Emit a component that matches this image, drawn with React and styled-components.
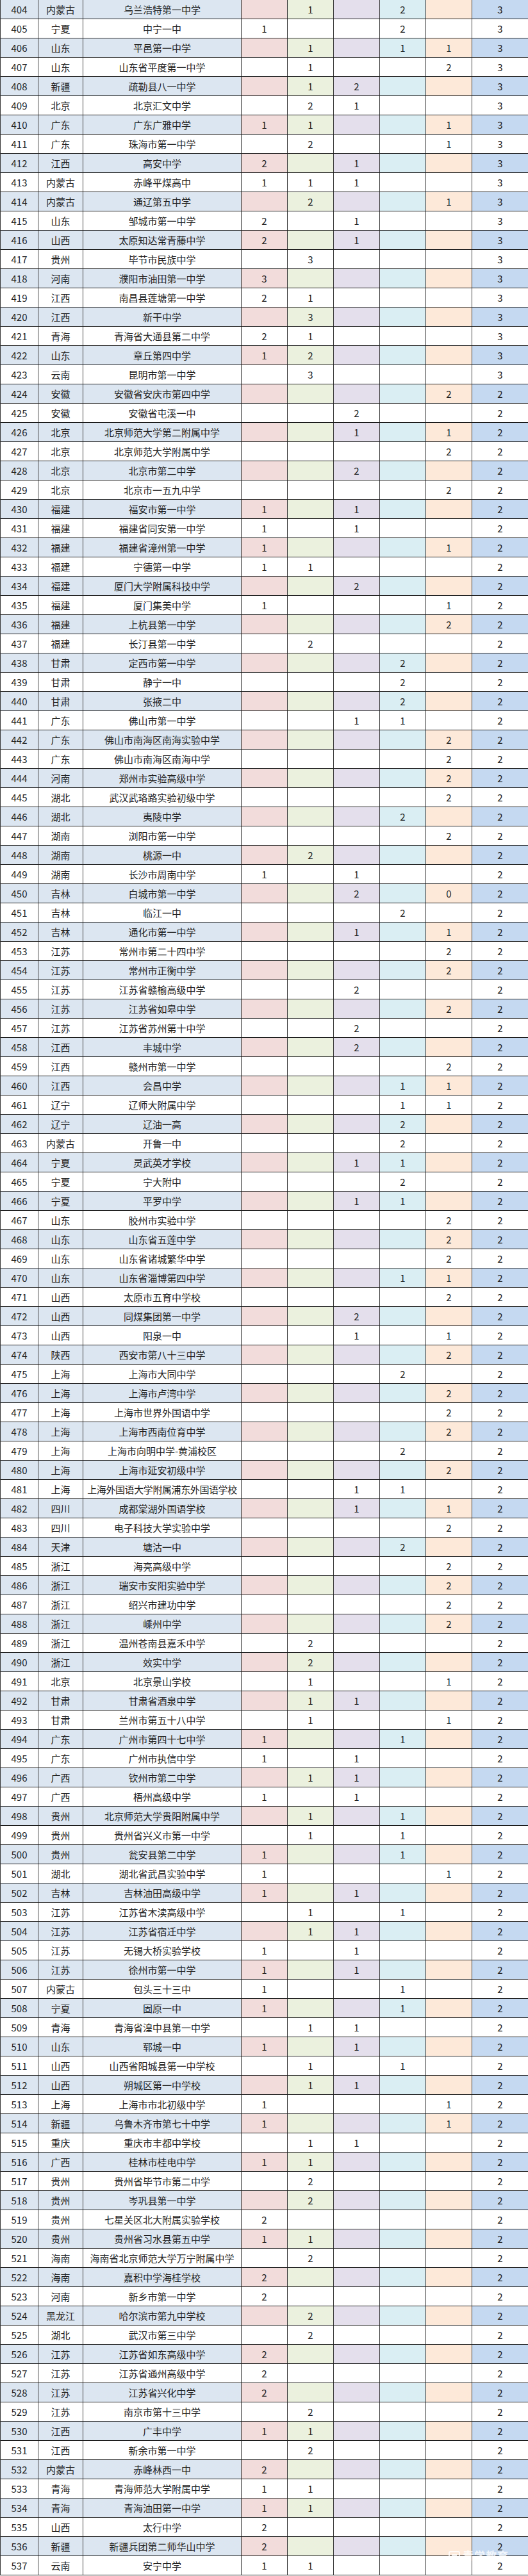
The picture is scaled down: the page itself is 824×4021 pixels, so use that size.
import React from 'react';
import styled, { createGlobalStyle } from 'styled-components';

const GlobalStyle = createGlobalStyle`
  html, body {
    margin: 0;
    padding: 0;
    background: #ffffff;
  }
  body {
    font-family: "Noto Sans CJK SC", "Liberation Sans", sans-serif;
  }
`;

// shaded-row colours, one per column
const SHADES = [
  '#dce6f1',
  '#dce6f1',
  '#dce6f1',
  '#f2dcdb',
  '#ebf1de',
  '#e4dfec',
  '#daeef3',
  '#fde9d9',
  '#c5d9f1',
];

const ROWS = `404|内蒙古|乌兰浩特第一中学|,1,,2,,3
405|宁夏|中宁一中|1,,,2,,3
406|山东|平邑第一中学|,1,,1,1,3
407|山东|山东省平度第一中学|,1,,,2,3
408|新疆|疏勒县八一中学|,1,2,,,3
409|北京|北京汇文中学|,2,1,,,3
410|广东|广东广雅中学|1,1,,,1,3
411|广东|珠海市第一中学|,2,,,1,3
412|江西|高安中学|2,,1,,,3
413|内蒙古|赤峰平煤高中|1,1,1,,,3
414|内蒙古|通辽第五中学|,2,,,1,3
415|山东|邹城市第一中学|2,,1,,,3
416|山西|太原知达常青藤中学|2,,1,,,3
417|贵州|毕节市民族中学|,3,,,,3
418|河南|濮阳市油田第一中学|3,,,,,3
419|江西|南昌县莲塘第一中学|2,1,,,,3
420|江西|新干中学|,3,,,,3
421|青海|青海省大通县第二中学|2,1,,,,3
422|山东|章丘第四中学|1,2,,,,3
423|云南|昆明市第一中学|,3,,,,3
424|安徽|安徽省安庆市第四中学|,,,,2,2
425|安徽|安徽省屯溪一中|,,2,,,2
426|北京|北京师范大学第二附属中学|,,1,,1,2
427|北京|北京师范大学附属中学|,,,,2,2
428|北京|北京市第二中学|,,2,,,2
429|北京|北京市一五九中学|,,,,2,2
430|福建|福安市第一中学|1,,1,,,2
431|福建|福建省同安第一中学|1,,1,,,2
432|福建|福建省漳州第一中学|1,,,,1,2
433|福建|宁德第一中学|1,1,,,,2
434|福建|厦门大学附属科技中学|,,2,,,2
435|福建|厦门集美中学|1,,,,1,2
436|福建|上杭县第一中学|,,,,2,2
437|福建|长汀县第一中学|,2,,,,2
438|甘肃|定西市第一中学|,,,2,,2
439|甘肃|静宁一中|,,,2,,2
440|甘肃|张掖二中|,,,2,,2
441|广东|佛山市第一中学|,,1,1,,2
442|广东|佛山市南海区南海实验中学|,,,,2,2
443|广东|佛山市南海区南海中学|,,,,2,2
444|河南|郑州市实验高级中学|,,,,2,2
445|湖北|武汉武珞路实验初级中学|,,,,2,2
446|湖北|夷陵中学|,,,2,,2
447|湖南|浏阳市第一中学|,,,,2,2
448|湖南|桃源一中|,2,,,,2
449|湖南|长沙市周南中学|1,,1,,,2
450|吉林|白城市第一中学|,,2,,0,2
451|吉林|临江一中|,,,2,,2
452|吉林|通化市第一中学|,,1,,1,2
453|江苏|常州市第二十四中学|,,,,2,2
454|江苏|常州市正衡中学|,,,,2,2
455|江苏|江苏省赣榆高级中学|,,2,,,2
456|江苏|江苏省如皋中学|,,,,2,2
457|江苏|江苏省苏州第十中学|,,2,,,2
458|江西|丰城中学|,,2,,,2
459|江西|赣州市第一中学|,,,,2,2
460|江西|会昌中学|,,,1,1,2
461|辽宁|辽师大附属中学|,,,1,1,2
462|辽宁|辽油一高|,,,2,,2
463|内蒙古|开鲁一中|,,,2,,2
464|宁夏|灵武英才学校|,,1,1,,2
465|宁夏|宁大附中|,,,2,,2
466|宁夏|平罗中学|,,1,1,,2
467|山东|胶州市实验中学|,,,,2,2
468|山东|山东省五莲中学|,,,,2,2
469|山东|山东省诸城繁华中学|,,,,2,2
470|山东|山东省淄博第四中学|,,,1,1,2
471|山西|太原市五育中学校|,,,,2,2
472|山西|同煤集团第一中学|,,2,,,2
473|山西|阳泉一中|,,1,,1,2
474|陕西|西安市第八十三中学|,,,,2,2
475|上海|上海市大同中学|,,,2,,2
476|上海|上海市卢湾中学|,,,,2,2
477|上海|上海市世界外国语中学|,,,,2,2
478|上海|上海市西南位育中学|,,,,2,2
479|上海|上海市向明中学-黄浦校区|,,,2,,2
480|上海|上海市延安初级中学|,,,,2,2
481|上海|上海外国语大学附属浦东外国语学校|,,1,1,,2
482|四川|成都棠湖外国语学校|,,1,,1,2
483|四川|电子科技大学实验中学|,,,,2,2
484|天津|塘沽一中|,,,2,,2
485|浙江|海亮高级中学|,,,,2,2
486|浙江|瑞安市安阳实验中学|,,,,2,2
487|浙江|绍兴市建功中学|,,,,2,2
488|浙江|嵊州中学|,,,,2,2
489|浙江|温州苍南县嘉禾中学|,2,,,,2
490|浙江|效实中学|,2,,,,2
491|北京|北京景山学校|,1,,,1,2
492|甘肃|甘肃省酒泉中学|,1,1,,,2
493|甘肃|兰州市第五十八中学|,1,,,1,2
494|广东|广州市第四十七中学|1,,,1,,2
495|广东|广州市执信中学|1,,1,,,2
496|广西|钦州市第二中学|,1,1,,,2
497|广西|梧州高级中学|1,,1,,,2
498|贵州|北京师范大学贵阳附属中学|,1,,1,,2
499|贵州|贵州省兴义市第一中学|,1,,1,,2
500|贵州|瓮安县第二中学|1,,,1,,2
501|湖北|湖北省武昌实验中学|1,,,,1,2
502|吉林|吉林油田高级中学|1,,1,,,2
503|江苏|江苏省木渎高级中学|,1,,1,,2
504|江苏|江苏省宿迁中学|,1,1,,,2
505|江苏|无锡大桥实验学校|1,,1,,,2
506|江苏|徐州市第一中学|1,,1,,,2
507|内蒙古|包头三十三中|1,,,1,,2
508|宁夏|固原一中|1,,,1,,2
509|青海|青海省湟中县第一中学|,1,1,,,2
510|山东|郓城一中|1,,1,,,2
511|山西|山西省阳城县第一中学校|,1,,1,,2
512|山西|朔城区第一中学校|,1,1,,,2
513|上海|上海市市北初级中学|1,,,,1,2
514|新疆|乌鲁木齐市第七十中学|1,,,,1,2
515|重庆|重庆市丰都中学校|,1,1,,,2
516|广西|桂林市桂电中学|1,1,,,,2
517|贵州|贵州省毕节市第二中学|,2,,,,2
518|贵州|岑巩县第一中学|,2,,,,2
519|贵州|七星关区北大附属实验学校|2,,,,,2
520|贵州|贵州省习水县第五中学|1,1,,,,2
521|海南|海南省北京师范大学万宁附属中学|,2,,,,2
522|海南|嘉积中学海桂学校|2,,,,,2
523|河南|新乡市第一中学|2,,,,,2
524|黑龙江|哈尔滨市第九中学校|,2,,,,2
525|湖北|武汉市第三中学|,2,,,,2
526|江苏|江苏省如东高级中学|2,,,,,2
527|江苏|江苏省通州高级中学|2,,,,,2
528|江苏|江苏省兴化中学|2,,,,,2
529|江苏|南京市第十三中学|,2,,,,2
530|江西|广丰中学|1,1,,,,2
531|江西|新余市第一中学|,2,,,,2
532|内蒙古|赤峰林西一中|2,,,,,2
533|青海|青海师范大学附属中学|1,1,,,,2
534|青海|青海油田第一中学|1,1,,,,2
535|山西|太行中学|2,,,,,2
536|新疆|新疆兵团第二师华山中学|2,,,,,2
537|云南|安宁中学|1,1,,,,2`
  .split('\n')
  .map((line) => {
    const [rank, province, school, nums] = line.split('|');
    return { rank, province, school, nums: nums.split(',') };
  });

const Page = styled.div`
  position: relative;
  width: 824px;
`;

const Sheet = styled.div`
  display: flex;
  flex-direction: column;
  width: 824px;
  border-left: 1px solid #333;
  box-sizing: border-box;
`;

const Row = styled.div`
  display: grid;
  grid-template-columns: 58px 70px 247px 72px 72px 72px 72px 72px 88px;
  height: 30px;
  box-sizing: border-box;
  border-bottom: 1px solid #1c1c1c;
`;

const Cell = styled.div`
  display: flex;
  align-items: center;
  justify-content: center;
  box-sizing: border-box;
  background: ${(p) => p.$bg};
  border-left: ${(p) => (p.$first ? 'none' : '1px solid #3a3a3a')};
  color: #222;
  font-size: ${(p) => (p.$wide ? '15px' : '15px')};
  line-height: 1;
  white-space: nowrap;
  overflow: hidden;
  letter-spacing: ${(p) => (p.$tight ? '-0.4px' : '0')};
`;

const Watermark = styled.div`
  position: absolute;
  left: 700px;
  top: 3976px;
  display: flex;
  align-items: center;
  gap: 4px;
  color: rgba(255, 255, 255, 0.8);
  font-size: 17px;
  font-weight: 700;
  letter-spacing: 1px;
  pointer-events: none;
`;

function Mark() {
  return (
    <svg width="18" height="16" viewBox="0 0 18 16">
      <rect x="1" y="2" width="16" height="12" rx="2" fill="none" stroke="rgba(255,255,255,0.8)" strokeWidth="2" />
      <rect x="5" y="6" width="8" height="4" fill="rgba(255,255,255,0.8)" />
    </svg>
  );
}

export default function App() {
  return (
    <Page>
      <GlobalStyle />
      <Sheet>
        {ROWS.map((r, i) => {
          const shaded = i % 2 === 0;
          const bg = (k) => (shaded ? SHADES[k] : '#ffffff');
          const cells = [r.rank, r.province, r.school, ...r.nums];
          return (
            <Row key={r.rank}>
              {cells.map((v, k) => (
                <Cell
                  key={k}
                  $bg={bg(k)}
                  $first={k === 0}
                  $tight={k === 2 && v.length >= 16}
                >
                  {v}
                </Cell>
              ))}
            </Row>
          );
        })}
      </Sheet>
      <Watermark>
        <Mark />
        青学教育
      </Watermark>
    </Page>
  );
}
